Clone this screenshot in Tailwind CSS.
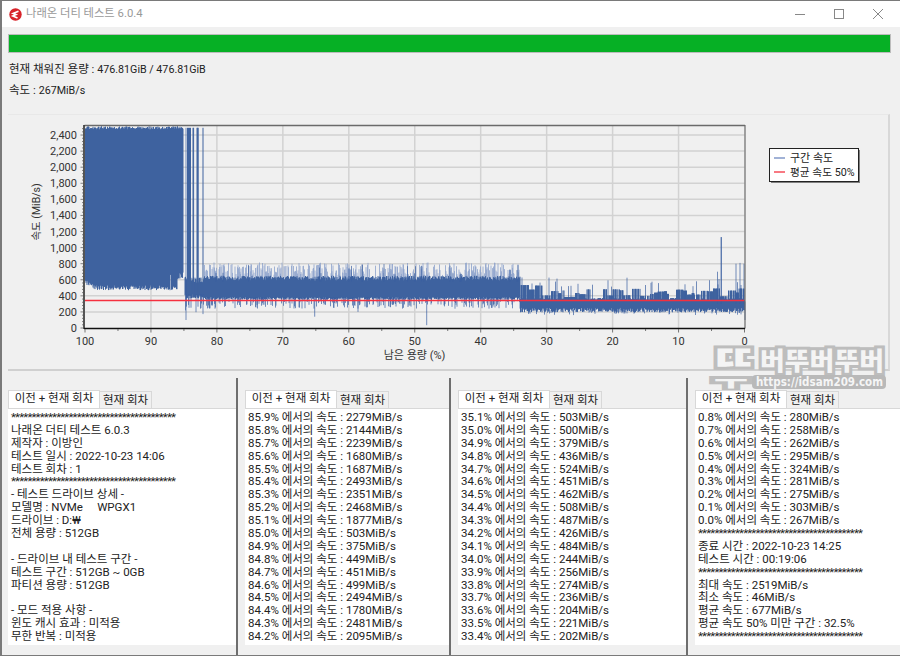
<!DOCTYPE html>
<html lang="ko">
<head>
  <meta charset="UTF-8" />
  <title>나래온 더티 테스트 6.0.4</title>
  <script src="https://cdn.jsdelivr.net/npm/@tailwindcss/browser@4"></script>
</head>
<body class="m-0 overflow-hidden">
  <div class="relative w-[900px] h-[656px] flex flex-col bg-[#f0f0f0] border-l-2 border-t border-b border-[#7a7a7a] font-['Roboto','Noto_Sans_CJK_KR',sans-serif] text-[11.5px] text-[#222]">

    <!-- title bar -->
    <div class="h-[26px] bg-white flex items-center shrink-0">
      <svg class="ml-[7px] w-[13px] h-[13px]" viewBox="0 0 13 13">
        <circle cx="6.5" cy="6.5" r="6.2" fill="#d8232a"/>
        <path d="M9.5 3.2 L4 5.5 L7 6.6 L3.8 8 L8.5 10" fill="none" stroke="#fff" stroke-width="1.6"/>
      </svg>
      <span class="ml-[4px] text-[11.3px] text-[#999]">나래온 더티 테스트 6.0.4</span>
      <div class="ml-auto mr-[2px] flex items-center">
        <svg class="w-[39px] h-[26px]" viewBox="0 0 39 26"><path d="M14 13.5h10" stroke="#888" fill="none"/></svg>
        <svg class="w-[39px] h-[26px]" viewBox="0 0 39 26"><rect x="14.5" y="8.5" width="9" height="9" fill="none" stroke="#888"/></svg>
        <svg class="w-[39px] h-[26px]" viewBox="0 0 39 26"><path d="M14 8l10 10M24 8l-10 10" stroke="#888" fill="none"/></svg>
      </div>
    </div>

    <!-- progress + status -->
    <div class="pl-[6px] pr-[9px] pt-[7px] shrink-0">
      <div class="h-[19px] bg-[#06b025] border border-[#bcbcbc]"></div>
      <div class="mt-[8px] ml-[1px] h-[16px] leading-[16px]">현재 채워진 용량 : <span class="text-[10.7px]">476.81GiB / 476.81GiB</span></div>
      <div class="mt-[5px] ml-[1px] h-[16px] leading-[16px]">속도 : <span class="text-[10.7px]">267MiB/s</span></div>
    </div>

    <!-- chart -->
    <div class="ml-[6px] mr-[10px] mt-[16px] h-[257px] shrink-0 border-t border-[#e8e8e8] border-r-2 border-b-2 border-r-[#d8d8d8] border-b-[#d0d0d0]">
      <svg id="chart" width="882" height="256" viewBox="8 115 882 256" class="block font-['Roboto','Noto_Sans_CJK_KR',sans-serif]"></svg>
    </div>

    <!-- result panels -->
    <div id="panels" class="flex flex-1 min-h-0 mt-[7px]"></div>

    <!-- watermark -->
    <svg class="absolute left-[704px] top-[330px] w-[190px] h-[64px] pointer-events-none font-['Noto_Sans_CJK_KR',sans-serif]" viewBox="0 -8 190 64">
      <g fill="#f4f4f4" stroke="#bdbdbd" stroke-width="6" paint-order="stroke" font-weight="900">
        <text x="6" y="33" font-size="36" textLength="44" lengthAdjust="spacingAndGlyphs">ㄸ</text>
        <text x="8" y="50" font-size="18" textLength="34" lengthAdjust="spacingAndGlyphs">ㅜ</text>
        <text x="54" y="31" font-size="25" textLength="124" lengthAdjust="spacingAndGlyphs">버뚜버뚜버</text>
      </g>
      <rect x="46" y="36" width="134" height="14" rx="4" fill="#b9b9b9"/>
      <text x="50" y="47" font-size="12" font-weight="700" fill="#f5f5f5" font-family="DejaVu Sans" textLength="127" lengthAdjust="spacingAndGlyphs">https://idsam209.com</text>
    </svg>
  </div>

  <script>
    // Chart geometry taken from the plot area
    const plotLeft = 85, plotRight = 744.5, plotTop = 125, plotBottom = 328;
    const xOf = pct => plotLeft + (100 - pct) * 6.595;
    const yOf = speed => plotBottom - speed * 0.0804;

    // small seeded random so the trace stays the same between runs
    let seed = 20221023;
    function rnd() {
      seed = (seed * 1664525 + 1013904223) % 4294967296;
      return seed / 4294967296;
    }
    const between = (a, b) => a + (b - a) * rnd();
    const seg = (x, a, b) => `M${x.toFixed(1)} ${yOf(a).toFixed(1)}V${yOf(b).toFixed(1)}`;

    function buildTrace() {
      let core = '', light = '', thin = '';
      let chunk = 0, chunkLeft = 0;
      for (let x = plotLeft + 0.5; x <= plotRight; x += 0.5) {
        const pct = 100 - (x - plotLeft) / 6.595;
        if (pct > 85.1) {
          let low = pct > 98.8 ? between(530, 590) : between(470, 530);
          if (pct < 86) low = between(600, 690);
          else if (pct < 87.1 && pct > 86.9) low = 660;
          core += seg(x, low, between(2470, 2510));
        } else if (pct > 84.9) {
          // short gap where the cache ran out
        } else if (pct > 82) {
          core += seg(x, between(370, 420), between(560, 640));
          if (rnd() < 0.25) thin += seg(x, between(170, 330), 420);
        } else if (pct > 34) {
          core += seg(x, between(355, 385), between(590, 650));
          if (rnd() < 0.5) light += seg(x, 580, between(660, 815));
          if (rnd() < 0.3) thin += seg(x, between(240, 340), 380);
          else if (rnd() < 0.06) thin += seg(x, 580, between(660, 800));
        } else {
          // slow section: dark blocks of uneven height over a noisy band
          if (chunkLeft <= 0) {
            chunkLeft = between(2, 9);
            chunk = pct > 28 ? between(380, 600) : between(360, 500);
          }
          chunkLeft -= 0.5;
          core += seg(x, between(195, 250), between(340, 370));
          if (rnd() < 0.7) core += seg(x, 340, chunk);
          if (rnd() < 0.06) thin += seg(x, 340, between(500, 640));
          if (rnd() < 0.12) thin += seg(x, between(160, 200), 230);
        }
      }
      // the spikes that stand out in the reference
      [187.5, 188.5, 189.5, 190.5].forEach(a => core += seg(a, 400, 2490));
      [193, 193.6, 197, 197.6, 198.2, 203].forEach(a => core += seg(a, 380, 2490));
      thin += seg(186, 100, 2490);
      light += seg(149.5, 510, 700);
      thin += seg(314.7, 140, 360) + seg(358, 200, 360) + seg(426.7, 35, 360);
      thin += seg(721, 300, 1130) + seg(721.5, 300, 1130) + seg(745, 100, 330);
      thin += seg(717.5, 300, 700) + seg(736, 300, 800) + seg(740, 300, 810) + seg(744, 300, 800);
      return { core, light, thin };
    }

    function buildChart() {
      const grey = '#d2d2d2', label = '#333';
      let s = '';
      // grid
      for (let v = 0; v <= 2400; v += 200) {
        if (v > 0) s += `<path d="M${plotLeft} ${yOf(v)}H${plotRight}" stroke="${grey}" stroke-width="1.5"/>`;
      }
      for (let p = 10; p < 100; p += 10) {
        s += `<path d="M${xOf(p)} ${plotTop}V${plotBottom}" stroke="${grey}" stroke-width="1.5"/>`;
      }
      // trace
      const t = buildTrace();
      s += `<path d="${t.light}" stroke="#8da2cb" stroke-width="0.8" fill="none"/>`;
      s += `<path d="${t.core}" stroke="#3f639f" stroke-width="1" fill="none"/>`;
      s += `<path d="${t.thin}" stroke="#3a5ea0" stroke-width="0.7" fill="none"/>`;
      s += `<path d="M${plotLeft} 300.5H${plotRight}" stroke="#f5303f" stroke-width="1.4"/>`;
      // frame
      s += `<path d="M84.5 125.5H745" stroke="#6a6a6a" stroke-width="1.5"/>`;
      s += `<path d="M745 125V328.5" stroke="#6a6a6a" stroke-width="1.2"/>`;
      s += `<path d="M84 125V329" stroke="#222" stroke-width="1.5"/>`;
      s += `<path d="M84 328.5H745" stroke="#111" stroke-width="1.5"/>`;
      // y ticks and labels
      for (let v = 0; v <= 2500; v += 40) {
        const major = v % 200 === 0;
        s += `<path d="M${major ? 80.5 : 82} ${yOf(v)}H84" stroke="#555" stroke-width="0.7"/>`;
      }
      for (let v = 0; v <= 2400; v += 200) {
        s += `<text x="77" y="${yOf(v) + 4}" font-size="11" fill="${label}" text-anchor="end">${v.toLocaleString('en-US')}</text>`;
      }
      // x ticks and labels
      for (let p = 0; p <= 100; p += 5) {
        s += `<path d="M${xOf(p)} 329V${p % 10 === 0 ? 332.5 : 331}" stroke="#555" stroke-width="0.8"/>`;
      }
      for (let p = 0; p <= 100; p += 10) {
        s += `<text x="${xOf(p)}" y="345" font-size="11" fill="${label}" text-anchor="middle">${p}</text>`;
      }
      // axis titles
      s += `<text x="414.5" y="359" font-size="11" fill="${label}" text-anchor="middle">남은 용량 (%)</text>`;
      s += `<text transform="translate(40 212) rotate(-90)" font-size="10.5" fill="${label}" text-anchor="middle">속도 (MiB/s)</text>`;
      // legend
      s += `<rect x="771" y="150" width="89" height="33" fill="#808080"/>`;
      s += `<rect x="769.5" y="148.5" width="89" height="33" fill="#fff" stroke="#222"/>`;
      s += `<path d="M774 158H785" stroke="#6f89c0" stroke-width="1.3"/>`;
      s += `<path d="M774 172H785" stroke="#f5303f" stroke-width="1.3"/>`;
      s += `<text x="790" y="162" font-size="11" fill="#222">구간 속도</text>`;
      s += `<text x="790" y="176" font-size="10.7" fill="#222">평균 속도 50%</text>`;
      document.getElementById('chart').innerHTML = s;
    }

    const stars = '*'.repeat(40);
    const speedLine = (pct, speed) => `${pct}% 에서의 속도 : ${speed}MiB/s`;

    const panels = [
      { width: 'w-[236px]', pad: 'pl-[6px]', lines: [
        stars, '나래온 더티 테스트 6.0.3', '제작자 : 이방인', '테스트 일시 : 2022-10-23 14:06', '테스트 회차 : 1', stars,
        '- 테스트 드라이브 상세 -', '모델명 : NVMe &nbsp; &nbsp; WPGX1', '드라이브 : D:₩', '전체 용량 : 512GB', '&nbsp;',
        '- 드라이브 내 테스트 구간 -', '테스트 구간 : 512GB ~ 0GB', '파티션 용량 : 512GB', '&nbsp;',
        '- 모드 적용 사항 -', '윈도 캐시 효과 : 미적용', '무한 반복 : 미적용'
      ] },
      { width: 'w-[213px]', pad: 'pl-[7px]', lines: [
        ['85.9', 2279], ['85.8', 2144], ['85.7', 2239], ['85.6', 1680], ['85.5', 1687], ['85.4', 2493],
        ['85.3', 2351], ['85.2', 2468], ['85.1', 1877], ['85.0', 503], ['84.9', 375], ['84.8', 449],
        ['84.7', 451], ['84.6', 499], ['84.5', 2494], ['84.4', 1780], ['84.3', 2481], ['84.2', 2095]
      ].map(r => speedLine(r[0], r[1])) },
      { width: 'w-[237px]', pad: 'pl-[7px]', lines: [
        ['35.1', 503], ['35.0', 500], ['34.9', 379], ['34.8', 436], ['34.7', 524], ['34.6', 451],
        ['34.5', 462], ['34.4', 508], ['34.3', 487], ['34.2', 426], ['34.1', 484], ['34.0', 244],
        ['33.9', 256], ['33.8', 274], ['33.7', 236], ['33.6', 204], ['33.5', 221], ['33.4', 202]
      ].map(r => speedLine(r[0], r[1])) },
      { width: 'flex-1', pad: 'pl-[7px]', lines: [
        ...[['0.8', 280], ['0.7', 258], ['0.6', 262], ['0.5', 295], ['0.4', 324], ['0.3', 281], ['0.2', 275], ['0.1', 303], ['0.0', 267]].map(r => speedLine(r[0], r[1])),
        stars, '종료 시간 : 2022-10-23 14:25', '테스트 시간 : 00:19:06', stars,
        '최대 속도 : 2519MiB/s', '최소 속도 : 46MiB/s', '평균 속도 : 677MiB/s', '평균 속도 50% 미만 구간 : 32.5%', stars
      ] }
    ];

    function createPanel(panel, index) {
      const el = document.createElement('div');
      el.className = panel.width + ' ' + panel.pad + ' shrink-0 pt-[12px] h-full' + (index < 3 ? ' border-r-2 border-[#6e6e6e]' : '');
      el.innerHTML = `
        <div class="flex items-end h-[18px] relative z-10">
          <div class="w-[92px] h-[18px] bg-white text-center leading-[15px] border-t border-l border-r border-[#d8d8d8]">이전 + 현재 회차</div>
          <div class="w-[52px] h-[17px] bg-[#f0f0f0] text-center leading-[17px] border-t border-r border-[#d8d8d8] whitespace-nowrap">현재 회차</div>
        </div>
        <div class="bg-white h-[237px] border-t border-[#d8d8d8] pl-[3px] pt-[2px] leading-[12.9px] whitespace-nowrap overflow-hidden">
          ${panel.lines.map(line => `<div class="h-[12.9px] ${line === stars ? 'tracking-[-0.85px]' : ''}">${line}</div>`).join('')}
        </div>`;
      return el;
    }

    buildChart();
    panels.forEach((p, i) => document.getElementById('panels').appendChild(createPanel(p, i)));
  </script>
</body>
</html>
